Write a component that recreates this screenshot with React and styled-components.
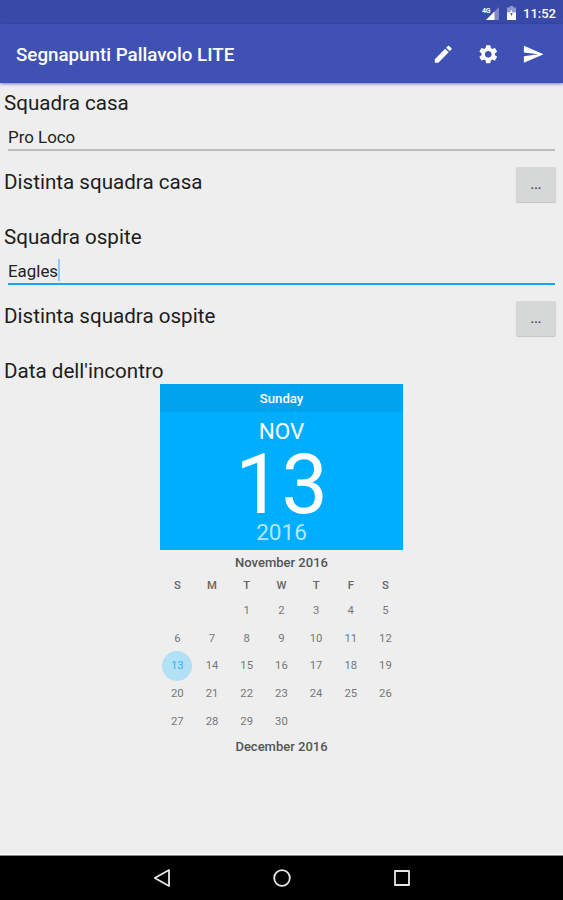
import React from 'react';
import styled, { createGlobalStyle } from 'styled-components';
import { MdEdit, MdSettings, MdSend } from 'react-icons/md';

const weekDays = ['S', 'M', 'T', 'W', 'T', 'F', 'S'];
const blanks = ['a', 'b'];
const days = Array.from({ length: 30 }, (_, i) => i + 1);

const SignalIcon = () => (
  <svg width="18" height="15" viewBox="0 0 18 15">
    <path d="M17 1V14H4z" fill="#fff" opacity="0.35" />
    <path d="M12.5 5.5V14H4z" fill="#fff" />
    <SignalText x="0" y="6.5">4G</SignalText>
  </svg>
);

const BatteryIcon = () => (
  <svg width="9" height="14" viewBox="0 0 9 14">
    <path d="M2.8 0h3.4v1.4H9V7H0V1.4h2.8z" fill="#fff" opacity="0.45" />
    <path d="M0 6.5h9V14H0z" fill="#fff" />
    <path d="M3.2 6.5h2.6L4.5 10z" fill="#3a49a9" />
    <path d="M4.8 3.4L2.6 7h3.8L4.8 6z" fill="#fff" />
  </svg>
);

const Calendar = () => (
  <Picker>
    <WeekDay>Sunday</WeekDay>
    <Selected>
      <Month>NOV</Month>
      <BigDay>13</BigDay>
      <Year>2016</Year>
    </Selected>
    <MonthTitle>November 2016</MonthTitle>
    <Grid $height={23}>
      {weekDays.map((d, i) => <DayName key={i}>{d}</DayName>)}
    </Grid>
    <Grid $height={27.6}>
      {blanks.map(b => <span key={b} />)}
      {days.map(d => <Day key={d} $selected={d === 13}>{d}</Day>)}
    </Grid>
    <MonthTitle $next>December 2016</MonthTitle>
  </Picker>
);

const App = () => {
  return (
    <>
      <GlobalStyle />
      <Screen>
        <StatusBar>
          <SignalIcon />
          <BatteryIcon />
          <Clock>11:52</Clock>
        </StatusBar>
        <AppBar>
          <Title>Segnapunti Pallavolo LITE</Title>
          <Action><MdEdit /></Action>
          <Action><MdSettings /></Action>
          <Action><MdSend /></Action>
        </AppBar>
        <Content>
          <Label>Squadra casa</Label>
          <Field>Pro Loco</Field>
          <Row>
            <Label>Distinta squadra casa</Label>
            <MoreButton>...</MoreButton>
          </Row>
          <Label>Squadra ospite</Label>
          <Field $focused>Eagles<Caret /></Field>
          <Row>
            <Label>Distinta squadra ospite</Label>
            <MoreButton>...</MoreButton>
          </Row>
          <Label>Data dell'incontro</Label>
          <Calendar />
        </Content>
        <NavBar>
          <svg width="18" height="20" viewBox="0 0 18 20">
            <path d="M16 2v16L1.8 10z" />
          </svg>
          <svg width="18" height="20" viewBox="0 0 18 20">
            <circle cx="9" cy="10" r="7.8" />
          </svg>
          <svg width="18" height="20" viewBox="0 0 18 20">
            <path d="M2 3h14v14H2z" />
          </svg>
        </NavBar>
      </Screen>
    </>
  );
};

const GlobalStyle = createGlobalStyle`
  * {
    box-sizing: border-box;
  }
  body {
    margin: 0;
    font-family: Roboto, sans-serif;
  }
`

const Screen = styled.div`
  display: flex;
  flex-direction: column;
  width: 563px;
  height: 900px;
  overflow: hidden;
  background: #eee;
`

const StatusBar = styled.div`
  display: flex;
  align-items: center;
  justify-content: flex-end;
  gap: 7px;
  height: 24px;
  padding: 2px 7px 0 0;
  background: #3949a8;
`

const SignalText = styled.text`
  font-size: 7px;
  font-weight: 700;
  letter-spacing: -0.3px;
  fill: #fff;
`

const Clock = styled.span`
  width: 33px;
  color: #fff;
  font-size: 13px;
  font-weight: 500;
  white-space: nowrap;
`

const AppBar = styled.div`
  position: relative;
  display: flex;
  align-items: center;
  height: 59px;
  padding: 2px 7px 0 16px;
  color: #fff;
  background: #3f51b5;
  box-shadow: 0 1px 3px rgba(0, 0, 0, 0.45);
`

const Title = styled.div`
  flex: 1;
  padding-top: 1px;
  font-size: 18.75px;
  font-weight: 500;
`

const Action = styled.span`
  display: flex;
  justify-content: center;
  width: 45px;
  font-size: 22.5px;
`

const Content = styled.div`
  flex: 1;
  padding: 8px 4px 0;
`

const Label = styled.div`
  height: 24px;
  color: #1d1d1d;
  font-size: 20.6px;
  line-height: 24px;
  white-space: nowrap;
`

const Field = styled.div`
  display: flex;
  align-items: center;
  height: 35px;
  margin: 1px 4px 0;
  padding-top: 9px;
  color: #222;
  font-size: 16.9px;
  border-bottom: 2px solid ${props => (props.$focused ? '#17a5ec' : '#bdbdbd')};
`

const Caret = styled.span`
  width: 2px;
  height: 22px;
  margin-bottom: 2px;
  background: #8fcaf2;
`

const Row = styled.div`
  display: flex;
  justify-content: space-between;
  height: 74px;
  padding: 19px 3px 0 0;
`

const MoreButton = styled.button`
  flex: none;
  width: 40px;
  height: 35px;
  margin-top: -3px;
  padding: 0;
  color: #444;
  font-family: inherit;
  font-size: 13px;
  font-weight: 500;
  background: #d6d7d7;
  border: none;
  border-radius: 2px;
  box-shadow: 0 1px 1px rgba(0, 0, 0, 0.18);
`

const Picker = styled.div`
  width: 243px;
  margin: 1px auto 0;
  text-align: center;
`

const WeekDay = styled.div`
  height: 28px;
  color: #fff;
  font-size: 13.2px;
  font-weight: 500;
  line-height: 29px;
  background: #02a3ee;
`

const Selected = styled.div`
  height: 138px;
  padding-top: 6px;
  color: #fff;
  background: #00aeff;
`

const Month = styled.div`
  height: 27px;
  font-size: 22.5px;
  line-height: 27px;
`

const BigDay = styled.div`
  height: 75px;
  font-size: 82.5px;
  line-height: 79px;
`

const Year = styled.div`
  height: 24px;
  color: #b3e7ff;
  font-size: 22.5px;
  line-height: 24px;
`

const MonthTitle = styled.div`
  height: 24px;
  color: #555;
  font-size: 13px;
  font-weight: 500;
  line-height: ${props => (props.$next ? 24 : 26)}px;
`

const Grid = styled.div`
  display: grid;
  grid-template-columns: repeat(7, 34.7px);
  grid-auto-rows: ${props => props.$height}px;
  place-items: center;
`

const DayName = styled.span`
  color: #666;
  font-size: 11.3px;
  font-weight: 500;
`

const Day = styled.span`
  display: flex;
  align-items: center;
  justify-content: center;
  width: 30px;
  height: 30px;
  color: ${props => (props.$selected ? '#2fb0f8' : '#777')};
  font-size: 11.3px;
  background: ${props => (props.$selected ? '#b2e0f4' : 'none')};
  border-radius: 50%;
`

const NavBar = styled.div`
  display: flex;
  justify-content: center;
  align-items: center;
  gap: 102px;
  height: 45px;
  background: #000;
  border-top: 1px solid #888;
  box-shadow: 0 -1px 1px #fff;

  svg {
    fill: none;
    stroke: #e6e6e6;
    stroke-width: 1.8;
    stroke-linejoin: round;
  }
`

export default App;
